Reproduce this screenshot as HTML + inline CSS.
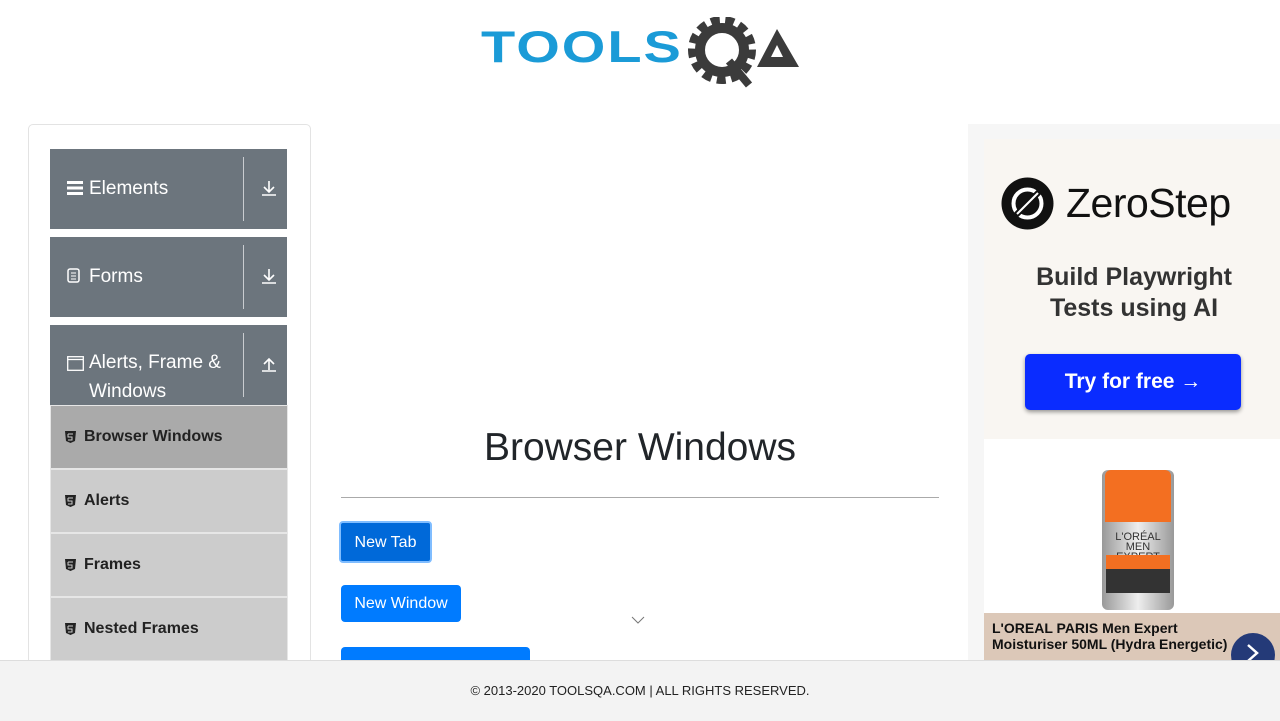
<!DOCTYPE html>
<html><head><style>
body{margin:0;width:1280px;height:720px;overflow:hidden;background:#fff;font-family:"Liberation Sans",sans-serif;position:relative}
.abs{position:absolute}
.card{left:28px;top:124px;width:281px;height:560px;border:1px solid #e3e3e3;border-radius:5px}
.grp{left:50px;width:237px;height:80px;background:#6c757d;color:#fff;font-size:19px}
.grp .sep{position:absolute;left:193px;top:8px;width:1px;height:64px;background:#c9ccd0}
.grp .t{position:absolute;left:39px;top:25px;line-height:29px}
.grp .ic{position:absolute;left:17px}
.grp .ar{position:absolute;left:211px;top:30px}
.sub{left:50px;width:236px;height:62px;background:#ccc;border:1px solid #e6e6e6;font-weight:bold;font-size:16px;color:#222}
.sub span{position:absolute;left:33px;top:22px}
.sub svg{position:absolute;left:14px;top:25px}
.btn{background:#007bff;color:#fff;font-size:16px;border-radius:4px;text-align:center;line-height:37px}
</style></head><body>
<div class="abs" style="left:481px;top:18px;width:330px;height:75px">
<span class="abs" style="left:0;top:-4px;font-size:56px;font-weight:bold;color:#1b9bd7;letter-spacing:2px;transform:scale(1.0,0.8);transform-origin:left center">TOOLS</span>
<svg class="abs" style="left:206px;top:-1px" width="118" height="75" viewBox="0 0 118 75"><circle cx="35" cy="33" r="27" fill="none" stroke="#3b3b3b" stroke-width="14" stroke-dasharray="8 5"/><circle cx="35" cy="33" r="22" fill="none" stroke="#3b3b3b" stroke-width="10"/><path d="M42 44 L62 68" stroke="#3b3b3b" stroke-width="8"/><path d="M70 50 L90 12 L112 50 Z M84 40 L96 40 L90 28 Z" fill="#3b3b3b" fill-rule="evenodd"/></svg>
</div>
<div class="abs card"></div>
<div class="abs grp" style="top:149px"><svg class="ic" style="top:32px" width="16" height="14"><rect y="0" width="16" height="3" fill="#fff"/><rect y="5.5" width="16" height="3" fill="#fff"/><rect y="11" width="16" height="3" fill="#fff"/></svg><div class="t">Elements</div><div class="sep"></div><svg class="ar" width="16" height="18"><path d="M8 2v11M3 8l5 5 5-5M1 16h14" stroke="#fff" stroke-width="1.6" fill="none"/></svg></div>
<div class="abs grp" style="top:237px"><svg class="ic" style="top:31px" width="13" height="15"><rect x="1" y="1" width="11" height="13" rx="2" fill="none" stroke="#fff" stroke-width="1.5"/><path d="M4 5h5M4 8h5M4 11h5" stroke="#fff"/></svg><div class="t">Forms</div><div class="sep"></div><svg class="ar" width="16" height="18"><path d="M8 2v11M3 8l5 5 5-5M1 16h14" stroke="#fff" stroke-width="1.6" fill="none"/></svg></div>
<div class="abs grp" style="top:325px"><svg class="ic" style="top:31px" width="17" height="15"><rect x="0.7" y="0.7" width="15.6" height="13.6" fill="none" stroke="#fff" stroke-width="1.3"/><path d="M1 3.5h15" stroke="#fff" stroke-width="1.3"/></svg><div class="t" style="top:23px">Alerts, Frame &amp;<br>Windows</div><div class="sep"></div><svg class="ar" width="16" height="18"><path d="M8 15V4M3 9l5-5 5 5M1 16h14" stroke="#fff" stroke-width="1.6" fill="none"/></svg></div>
<div class="abs sub" style="top:405px;background:#aaa"><svg width="11" height="12"><path d="M0 0h11l-1 10-4.5 2L1 10z" fill="#222"/><path d="M3 3h5M3 3v3h4v3H3" stroke="#ccc" fill="none"/></svg><span>Browser Windows</span></div>
<div class="abs sub" style="top:469px"><svg width="11" height="12"><path d="M0 0h11l-1 10-4.5 2L1 10z" fill="#222"/><path d="M3 3h5M3 3v3h4v3H3" stroke="#ccc" fill="none"/></svg><span>Alerts</span></div>
<div class="abs sub" style="top:533px"><svg width="11" height="12"><path d="M0 0h11l-1 10-4.5 2L1 10z" fill="#222"/><path d="M3 3h5M3 3v3h4v3H3" stroke="#ccc" fill="none"/></svg><span>Frames</span></div>
<div class="abs sub" style="top:597px"><svg width="11" height="12"><path d="M0 0h11l-1 10-4.5 2L1 10z" fill="#222"/><path d="M3 3h5M3 3v3h4v3H3" stroke="#ccc" fill="none"/></svg><span>Nested Frames</span></div>

<div class="abs" style="left:341px;top:426px;width:598px;text-align:center;font-size:39px;color:#212529">Browser Windows</div>
<div class="abs" style="left:341px;top:497px;width:598px;height:1px;background:#aaa"></div>
<div class="abs btn" style="left:339px;top:521px;width:89px;height:38px;background:#0069d9;border:2px solid #80bdff;line-height:40px">New Tab</div>
<div class="abs btn" style="left:341px;top:585px;width:120px;height:37px;line-height:38px">New Window</div>
<div class="abs btn" style="left:341px;top:647px;width:189px;height:37px"></div>
<svg class="abs" style="left:631px;top:616px" width="14" height="8"><path d="M1 1l6 6 6-6" stroke="#777" fill="none"/></svg>

<div class="abs" style="left:968px;top:124px;width:312px;height:540px;background:#f6f6f6"></div>
<div class="abs" style="left:984px;top:139px;width:296px;height:300px;background:#f9f6f2"></div>
<svg class="abs" style="left:1001px;top:177px" width="53" height="53"><circle cx="26.5" cy="26.5" r="26" fill="#111"/><circle cx="26.5" cy="26.5" r="14" fill="none" stroke="#fff" stroke-width="4"/><path d="M14 39L39 14" stroke="#111" stroke-width="6"/><path d="M16 37L37 16" stroke="#fff" stroke-width="2"/></svg>
<div class="abs" style="left:1066px;top:180px;font-size:41px;color:#111;letter-spacing:-0.5px">ZeroStep</div>
<div class="abs" style="left:984px;top:262px;width:300px;text-align:center;font-size:25px;font-weight:bold;color:#333;line-height:31px">Build Playwright<br>Tests using AI</div>
<div class="abs" style="left:1025px;top:354px;width:216px;height:56px;background:#0a2cff;border-radius:5px;color:#fff;font-weight:bold;font-size:21px;text-align:center;line-height:56px;box-shadow:0 2px 4px rgba(0,0,0,.4)">Try for free →</div>
<div class="abs" style="left:984px;top:439px;width:296px;height:174px;background:#fff"></div>
<div class="abs" style="left:1102px;top:470px;width:72px;height:140px;background:linear-gradient(90deg,#999,#eee,#999);border-radius:6px"></div>
<div class="abs" style="left:1105px;top:470px;width:66px;height:52px;background:#f36f21;border-radius:6px 6px 0 0"></div>
<div class="abs" style="left:1106px;top:532px;width:64px;height:20px;font-size:11px;color:#333;text-align:center;line-height:10px">L'ORÉAL<br>MEN EXPERT</div>
<div class="abs" style="left:1106px;top:555px;width:64px;height:14px;background:#f36f21"></div>
<div class="abs" style="left:1106px;top:569px;width:64px;height:24px;background:#333"></div>
<div class="abs" style="left:984px;top:613px;width:296px;height:47px;background:#dcc8b8"></div>
<div class="abs" style="left:992px;top:620px;font-size:14px;font-weight:bold;color:#111;line-height:16px">L'OREAL PARIS Men Expert<br>Moisturiser 50ML (Hydra Energetic)</div>
<div class="abs" style="left:1231px;top:633px;width:44px;height:44px;border-radius:50%;background:#243a78"></div>
<svg class="abs" style="left:1246px;top:643px" width="14" height="20"><path d="M2 2l9 8-9 8" stroke="#fff" stroke-width="2.5" fill="none"/></svg>

<div class="abs" style="left:0;top:660px;width:1280px;height:60px;background:#f3f3f3;border-top:1px solid #ddd;text-align:center;line-height:60px;font-size:13px;color:#222;z-index:5">© 2013-2020 TOOLSQA.COM | ALL RIGHTS RESERVED.</div>
</body></html>
